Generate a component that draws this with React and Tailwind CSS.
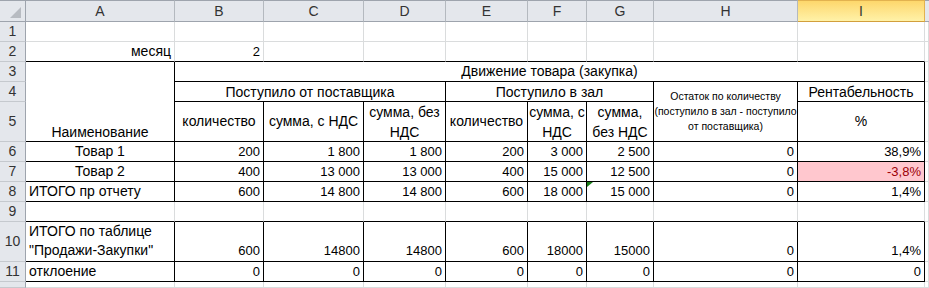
import React from 'react';

const GRID = 'border-r-[#dadcdd] border-b-[#dadcdd]';
const BLK = 'border-r-black border-b-black';
const NUM = 'justify-end items-center pr-[3px] text-[13px]';

const Cell = ({ cls = '', children }) => (
  <div className={`relative flex min-w-0 overflow-hidden whitespace-nowrap border-r border-b ${cls}`}>{children}</div>
);

const RowHead = ({ n }) => (
  <div className="flex items-center justify-center border-r border-b border-r-[#9ea4ad] border-b-[#c5c9ce] bg-[#e4e7ec] text-[14px] text-[#333]">
    {n}
  </div>
);

const ColHead = ({ label, selected }) => (
  <div
    className={
      selected
        ? 'flex items-center justify-center border-t border-r border-b border-t-[#e2b24f] border-r-[#e2b24f] border-b-[#d29f3c] bg-gradient-to-b from-[#fdd76b] to-[#fff2a8] text-[14px] text-[#333]'
        : 'flex items-center justify-center border-t border-r border-b border-t-[#9ea4ad] border-r-[#b4b9bf] border-b-[#9ea4ad] bg-[#e4e7ec] text-[14px] text-[#333]'
    }
  >
    {label}
  </div>
);

const dataRows = [
  { n: 6, name: 'Товар 1', center: true, v: ['200', '1 800', '1 800', '200', '3 000', '2 500', '0', '38,9%'] },
  { n: 7, name: 'Товар 2', center: true, v: ['400', '13 000', '13 000', '400', '15 000', '12 500', '0', '-3,8%'] },
  { n: 8, name: 'ИТОГО пр отчету', center: false, v: ['600', '14 800', '14 800', '600', '18 000', '15 000', '0', '1,4%'] },
];

export default function App() {
  const letters = ['A', 'B', 'C', 'D', 'E', 'F', 'G', 'H', 'I'];

  return (
    <div className="h-[288px] w-[929px] overflow-hidden bg-white font-['Liberation_Sans',Arial,sans-serif] text-[14px] text-black">
      <div className="grid h-full grid-cols-[26px_149px_89px_100px_82px_82px_59px_67px_144px_127px_1fr] grid-rows-[22px_20px_20px_20px_20px_40px_20px_20px_20px_20px_40px_20px_1fr]">
        {/* column headers */}
        <div className="relative border-t border-r border-b border-t-[#9ea4ad] border-r-[#9ea4ad] border-b-[#9ea4ad] bg-[#e4e7ec]">
          <svg className="absolute right-[4px] bottom-[3px]" width="11" height="11" viewBox="0 0 11 11">
            <polygon points="11,0 11,11 0,11" fill="#b7bbc1" />
          </svg>
        </div>
        {letters.map((l) => (
          <ColHead key={l} label={l} selected={l === 'I'} />
        ))}
        <div className="border-t border-b border-t-[#9ea4ad] border-b-[#9ea4ad] bg-[#e4e7ec]" />

        {/* row 1 */}
        <RowHead n={1} />
        {letters.map((l) => (
          <Cell key={l} cls={GRID} />
        ))}
        <Cell cls={GRID} />

        {/* row 2 */}
        <RowHead n={2} />
        <Cell cls="border-r-[#dadcdd] border-b-black justify-end items-center pr-[3px]">месяц</Cell>
        <Cell cls={`border-r-[#dadcdd] border-b-black ${NUM}`}>2</Cell>
        {letters.slice(2).map((l) => (
          <Cell key={l} cls="border-r-[#dadcdd] border-b-black" />
        ))}
        <Cell cls={GRID} />

        {/* row 3 */}
        <RowHead n={3} />
        <Cell cls={`row-span-3 ${BLK} items-end justify-center leading-[18px]`}>Наименование</Cell>
        <Cell cls={`col-span-8 ${BLK} items-center justify-center`}>Движение товара (закупка)</Cell>
        <Cell cls={GRID} />

        {/* row 4 */}
        <RowHead n={4} />
        <Cell cls={`col-span-3 ${BLK} items-center justify-center pt-[1px]`}>Поступило от поставщика</Cell>
        <Cell cls={`col-span-3 ${BLK} items-center justify-center pt-[1px]`}>Поступило в зал</Cell>
        <Cell cls={`row-span-2 ${BLK} flex-col items-center justify-center text-center text-[10.5px] leading-[15px]`}>
          <span>Остаток по количеству</span>
          <span>(поступило в зал - поступило</span>
          <span>от поставщика)</span>
        </Cell>
        <Cell cls={`${BLK} items-center justify-center pt-[1px]`}>Рентабельность</Cell>
        <Cell cls={GRID} />

        {/* row 5 */}
        <RowHead n={5} />
        <Cell cls={`${BLK} items-center justify-center`}>количество</Cell>
        <Cell cls={`${BLK} items-center justify-center`}>сумма, с НДС</Cell>
        <Cell cls={`${BLK} items-center justify-center text-center leading-[20px]`}>
          сумма, без<br />НДС
        </Cell>
        <Cell cls={`${BLK} items-center justify-center`}>количество</Cell>
        <Cell cls={`${BLK} items-center justify-center text-center leading-[20px]`}>
          сумма, с<br />НДС
        </Cell>
        <Cell cls={`${BLK} items-center justify-center text-center leading-[20px]`}>
          сумма,<br />без НДС
        </Cell>
        <Cell cls={`${BLK} items-center justify-center`}>%</Cell>
        <Cell cls={GRID} />

        {/* rows 6-8 */}
        {dataRows.map((r) => (
          <React.Fragment key={r.n}>
            <RowHead n={r.n} />
            <Cell cls={`${BLK} items-center ${r.center ? 'justify-center' : 'justify-start pl-[3px]'}`}>{r.name}</Cell>
            {r.v.map((v, i) => (
              <Cell
                key={i}
                cls={`${BLK} ${NUM} ${r.n === 7 && i === 7 ? 'bg-[#ffc7ce] text-[#9c0006]' : ''}`}
              >
                {r.n === 8 && i === 5 && (
                  <svg className="absolute left-0 top-0" width="6" height="5" viewBox="0 0 6 5">
                    <polygon points="0,0 6,0 0,5" fill="#1a7f1a" />
                  </svg>
                )}
                {v}
              </Cell>
            ))}
            <Cell cls={GRID} />
          </React.Fragment>
        ))}

        {/* row 9 */}
        <RowHead n={9} />
        {letters.map((l) => (
          <Cell key={l} cls="border-r-[#dadcdd] border-b-black" />
        ))}
        <Cell cls={GRID} />

        {/* row 10 */}
        <RowHead n={10} />
        <Cell cls={`${BLK} flex-col justify-end pl-[3px] pb-[1px] leading-[19px]`}>
          <span>ИТОГО по таблице</span>
          <span>"Продажи-Закупки"</span>
        </Cell>
        {['600', '14800', '14800', '600', '18000', '15000', '0', '1,4%'].map((v, i) => (
          <Cell key={i} cls={`${BLK} items-end justify-end pr-[3px] pb-[1px] text-[13px] leading-[19px]`}>
            {v}
          </Cell>
        ))}
        <Cell cls={GRID} />

        {/* row 11 */}
        <RowHead n={11} />
        <Cell cls={`${BLK} items-center pl-[3px]`}>отклоение</Cell>
        {['0', '0', '0', '0', '0', '0', '0', '0'].map((v, i) => (
          <Cell key={i} cls={`${BLK} ${NUM}`}>
            {v}
          </Cell>
        ))}
        <Cell cls={GRID} />

        {/* row 12 (cut off) */}
        <RowHead n="" />
        {letters.map((l) => (
          <Cell key={l} cls={GRID} />
        ))}
        <Cell cls={GRID} />
      </div>
    </div>
  );
}
